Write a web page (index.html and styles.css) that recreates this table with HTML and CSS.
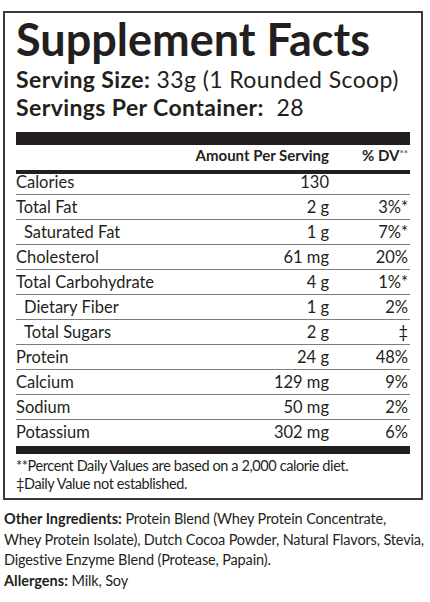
FILE: index.html
```html
<!DOCTYPE html>
<html lang="en">
<head>
  <meta charset="UTF-8">
  <title>Supplement Facts</title>
  <link rel="stylesheet" href="styles.css">
</head>
<body>
  <div class="facts">
    <h1>Supplement Facts</h1>
    <p class="serving"><b>Serving Size:</b> 33g (1 Rounded Scoop)</p>
    <p class="serving"><b>Servings Per Container:</b>&nbsp; 28</p>

    <div class="bar thick"></div>
    <div class="row head">
      <span class="name"></span>
      <span class="amt">Amount Per Serving</span>
      <span class="dv">% DV<small>**</small></span>
    </div>
    <div class="bar mid"></div>

    <div class="row first"><span class="name">Calories</span><span class="amt">130</span><span class="dv"></span></div>
    <div class="row"><span class="name">Total Fat</span><span class="amt">2 g</span><span class="dv">3%*</span></div>
    <div class="row sub"><span class="name">Saturated Fat</span><span class="amt">1 g</span><span class="dv">7%*</span></div>
    <div class="row"><span class="name">Cholesterol</span><span class="amt">61 mg</span><span class="dv">20%</span></div>
    <div class="row"><span class="name">Total Carbohydrate</span><span class="amt">4 g</span><span class="dv">1%*</span></div>
    <div class="row sub"><span class="name">Dietary Fiber</span><span class="amt">1 g</span><span class="dv">2%</span></div>
    <div class="row sub"><span class="name">Total Sugars</span><span class="amt">2 g</span><span class="dv">‡</span></div>
    <div class="row"><span class="name">Protein</span><span class="amt">24 g</span><span class="dv">48%</span></div>
    <div class="row"><span class="name">Calcium</span><span class="amt">129 mg</span><span class="dv">9%</span></div>
    <div class="row"><span class="name">Sodium</span><span class="amt">50 mg</span><span class="dv">2%</span></div>
    <div class="row last"><span class="name">Potassium</span><span class="amt">302 mg</span><span class="dv">6%</span></div>

    <div class="bar low"></div>
    <p class="note">**Percent Daily Values are based on a 2,000 calorie diet.<br>‡Daily Value not established.</p>
  </div>

  <p class="ingredients"><b>Other Ingredients:</b> Protein Blend (Whey Protein Concentrate,<br>Whey Protein Isolate), Dutch Cocoa Powder, Natural Flavors, Stevia,<br>Digestive Enzyme Blend (Protease, Papain).<br><b>Allergens:</b> Milk, Soy</p>
</body>
</html>
```

FILE: styles.css
```css
body {
  margin: 0;
  background: #fff;
  color: #231f20;
  font-family: Lato, "Open Sans", sans-serif;
}
.facts {
  width: 394px;
  margin: 11px 0 0 3px;
  padding: 0 11px 5px 11px;
  border: 2px solid #3a3a3a;
}
h1 {
  margin: 0;
  font-size: 45px;
  font-weight: 700;
  line-height: 52px;
}
.serving {
  margin: 0;
  font-size: 23px;
  letter-spacing: 0.4px;
  line-height: 28px;
}
.bar {
  background: #231f20;
}
.thick {
  height: 13px;
  margin-top: 11px;
}
.mid {
  height: 4px;
}
.low {
  height: 8px;
}
.row {
  display: flex;
  align-items: flex-end;
  height: 25px;
  padding-bottom: 2px;
  box-sizing: border-box;
  font-size: 16.5px;
  border-bottom: 1px solid #7d7d7d;
}
.row.first {
  height: 21px;
}
.row.last {
  height: 26px;
  padding-bottom: 4px;
  border-bottom: none;
}
.row.head {
  height: 25px;
  padding-bottom: 6px;
  border-bottom: none;
  font-size: 15px;
  font-weight: 700;
}
.row.head small {
  font-size: 10px;
  vertical-align: 4px;
  color: #666;
}
.name {
  flex: 1;
}
.sub .name {
  padding-left: 8px;
}
.amt {
  text-align: right;
}
.dv {
  width: 79px;
  padding-right: 2px;
  text-align: right;
}
.note {
  margin: 3px 0 0;
  font-size: 14.5px;
  letter-spacing: -0.4px;
  line-height: 18px;
}
.ingredients {
  margin: 9px 0 0 4px;
  font-size: 14.5px;
  letter-spacing: -0.15px;
  line-height: 20.7px;
  white-space: nowrap;
}
.ingredients b {
  letter-spacing: 0;
}
```
